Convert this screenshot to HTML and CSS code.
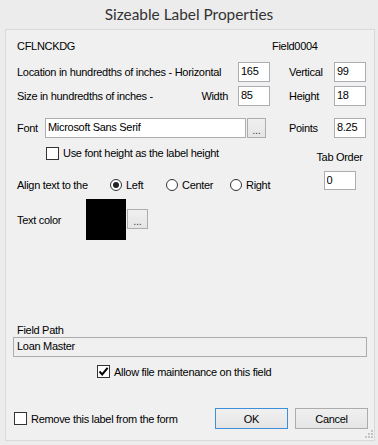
FILE: index.html
```html
<!DOCTYPE html>
<html lang="en">

<head>
  <meta charset="UTF-8">
  <meta name="viewport" content="width=device-width, initial-scale=1.0">
  <title>Sizeable Label Properties</title>

  <link rel="stylesheet" href="styles.css">

</head>

<body>

  <div class="window">
    <div class="caption">Sizeable Label Properties</div>

    <div class="client">
      <div class="row ids">
        <span class="form-id">CFLNCKDG</span>
        <span>Field0004</span>
      </div>

      <div class="row pair loc">
        <span class="lbl">Location in hundredths of inches - Horizontal</span>
        <input class="box" type="text" value="165">
        <span class="lbl side">Vertical</span>
        <input class="box" type="text" value="99">
      </div>

      <div class="row pair size">
        <span class="lbl split"><span>Size in hundredths of inches -</span><span>Width</span></span>
        <input class="box" type="text" value="85">
        <span class="lbl side">Height</span>
        <input class="box" type="text" value="18">
      </div>

      <div class="row font">
        <span class="lbl font-lbl">Font</span>
        <input class="box font-box" type="text" value="Microsoft Sans Serif">
        <button class="btn dots">...</button>
        <span class="lbl points">Points</span>
        <input class="box" type="text" value="8.25">
      </div>

      <div class="mid">
        <div class="mid-left">
          <label class="row check use-height">
            <span class="chk"></span>
            <span>Use font height as the label height</span>
          </label>

          <div class="row align">
            <span class="lbl align-lbl">Align text to the</span>
            <label class="opt opt-left"><span class="radio on"></span>Left</label>
            <label class="opt opt-center"><span class="radio"></span>Center</label>
            <label class="opt"><span class="radio"></span>Right</label>
          </div>

          <div class="row color">
            <span class="lbl color-lbl">Text color</span>
            <span class="swatch"></span>
            <button class="btn dots color-btn">...</button>
          </div>
        </div>

        <div class="tab-order">
          <span class="lbl">Tab Order</span>
          <input class="box tab-box" type="text" value="0">
        </div>
      </div>

      <div class="bottom">
        <div class="path-lbl">Field Path</div>
        <input class="box path-box" type="text" value="Loan Master" readonly>

        <label class="row check allow">
          <span class="chk checked">
            <svg width="11" height="11" viewBox="0 0 11 11"><path d="M1.5 5.5 L4.2 8.4 L9.6 1.8" fill="none" stroke="#000" stroke-width="2"/></svg>
          </span>
          <span>Allow file maintenance on this field</span>
        </label>

        <div class="actions">
          <label class="check remove">
            <span class="chk"></span>
            <span>Remove this label from the form</span>
          </label>
          <button class="btn push ok">OK</button>
          <button class="btn push">Cancel</button>
        </div>
      </div>

      <svg class="grip" width="9" height="9" viewBox="0 0 9 9">
        <rect x="7" y="1" width="2" height="2" fill="#c4c4c4"/>
        <rect x="4" y="4" width="2" height="2" fill="#c4c4c4"/>
        <rect x="7" y="4" width="2" height="2" fill="#c4c4c4"/>
        <rect x="1" y="7" width="2" height="2" fill="#c4c4c4"/>
        <rect x="4" y="7" width="2" height="2" fill="#c4c4c4"/>
        <rect x="7" y="7" width="2" height="2" fill="#c4c4c4"/>
      </svg>
    </div>
  </div>

</body>

</html>
```

FILE: styles.css
```css
* {
  box-sizing: border-box;
}

body {
  margin: 0;
  background: #ececec;
  font-family: "Liberation Sans", Arial, sans-serif;
  font-size: 11px;
  letter-spacing: -0.3px;
  color: #000;
}

.window {
  width: 378px;
  height: 445px;
  background: #ececec;
}

.caption {
  height: 29px;
  line-height: 29px;
  text-align: center;
  font-family: Lato, "Noto Sans", sans-serif;
  font-size: 15.4px;
  letter-spacing: 0;
  color: #333;
}

.client {
  position: relative;
  margin-left: 5px;
  width: 370px;
  height: 412px;
  border: 1px solid #d9d9d9;
  background: #f0f0f0;
  padding: 0 6px 11px 7px;
  display: flex;
  flex-direction: column;
}

.row {
  display: flex;
  align-items: center;
  line-height: 14px;
}

.ids {
  margin-top: 9px;
  padding-left: 4px;
  height: 14px;
}

.form-id {
  width: 255px;
}

.box {
  height: 20px;
  width: 32px;
  border: 1px solid #abadb3;
  background: #fff;
  padding: 1px 2px 3px;
  font: inherit;
  letter-spacing: inherit;
  line-height: 14px;
  color: #000;
  outline: none;
}

.pair {
  display: grid;
  grid-template-columns: 221px 32px 64px 32px;
  align-items: center;
  padding-left: 4px;
  height: 20px;
}

.loc {
  margin-top: 9px;
}

.size {
  margin-top: 4px;
}

.side {
  padding-left: 19px;
}

.split {
  display: flex;
  justify-content: space-between;
  padding-right: 10px;
}

.font {
  margin-top: 12px;
  padding-left: 4px;
  height: 20px;
}

.font-lbl {
  width: 28px;
}

.font-box {
  width: 201px;
}

.btn {
  font: inherit;
  letter-spacing: inherit;
  color: #000;
  border: 1px solid #acacac;
  background: linear-gradient(#f0f0f0, #e5e5e5);
  padding: 0;
  margin: 0;
}

.dots {
  width: 19px;
  height: 20px;
  margin-left: 1px;
  line-height: 22px;
  color: #444;
}

.points {
  width: 45px;
  margin-left: 23px;
}

.mid {
  display: flex;
  margin-top: 8px;
  padding-left: 4px;
}

.check {
  display: flex;
  align-items: center;
  gap: 4px;
}

.chk {
  width: 13px;
  height: 13px;
  border: 1px solid #333;
  background: #fff;
  display: flex;
  align-items: center;
  justify-content: center;
}

.use-height {
  height: 14px;
  padding-left: 29px;
}

.align {
  margin-top: 18px;
  height: 14px;
}

.align-lbl {
  width: 93px;
}

.opt {
  display: flex;
  align-items: center;
  gap: 2px;
}

.opt-left {
  width: 56px;
}

.opt-center {
  width: 64px;
}

.radio {
  width: 12px;
  height: 12px;
  border: 1px solid #333;
  border-radius: 50%;
  background: #fff;
  display: flex;
  align-items: center;
  justify-content: center;
  margin-right: 2px;
}

.radio.on::after {
  content: '';
  width: 6px;
  height: 6px;
  border-radius: 50%;
  background: #222;
}

.color {
  margin-top: 7px;
}

.color-lbl {
  width: 69px;
}

.swatch {
  width: 40px;
  height: 41px;
  background: #000;
}

.color-btn {
  width: 21px;
  margin-left: 1px;
  margin-top: -2px;
}

.tab-order {
  margin-left: auto;
  margin-right: 5px;
  margin-top: 4px;
  width: 47px;
  display: flex;
  flex-direction: column;
  align-items: center;
  line-height: 14px;
  white-space: nowrap;
}

.tab-box {
  margin-top: 7px;
  height: 19px;
}

.bottom {
  margin-top: auto;
  display: flex;
  flex-direction: column;
}

.path-lbl {
  line-height: 14px;
  padding-left: 4px;
}

.path-box {
  width: 354px;
  background: #f0f0f0;
  border-color: #adadad;
  padding-left: 3px;
}

.allow {
  margin-top: 8px;
  padding-left: 84px;
  height: 13px;
}

.actions {
  display: flex;
  align-items: center;
  margin-top: 30px;
}

.remove {
  margin-left: 1px;
}

.push {
  width: 73px;
  height: 21px;
}

.ok {
  margin-left: auto;
  border-color: #3c8fd8;
  margin-right: 7px;
}

.grip {
  position: absolute;
  right: 1px;
  bottom: 2px;
}
```
